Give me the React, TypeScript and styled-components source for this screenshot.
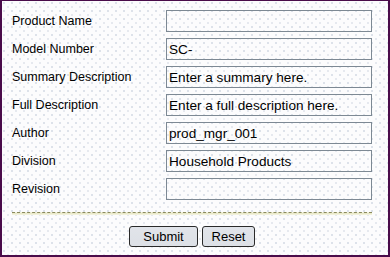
import React from "react";
import styled, { createGlobalStyle } from "styled-components";

const Global = createGlobalStyle`
  html, body { margin: 0; padding: 0; background: #ffffff; }
  * { box-sizing: border-box; }
`;

const dots = `
  radial-gradient(circle at 2px 2px, #dde2ea 0.8px, transparent 1.2px),
  radial-gradient(circle at 6px 6px, #e6e9ef 0.8px, transparent 1.2px),
  #fcfcfd
`;

const Panel = styled.form`
  width: 390px;
  height: 257px;
  border-style: solid;
  border-color: #4a0c4a;
  border-width: 1px 2px 2px 2px;
  background: ${dots};
  background-size: 8px 8px;
  padding: 9px 16px 0 10px;
  display: flex;
  flex-direction: column;
  font-family: "Liberation Sans", Arial, sans-serif;
`;

const Fields = styled.div`
  display: grid;
  grid-template-columns: 154px 206px;
  grid-auto-rows: 22px;
  row-gap: 6px;
  align-items: center;
`;

const Label = styled.label`
  font-size: 12.5px;
  color: #000;
  line-height: 22px;
`;

const Input = styled.input`
  width: 206px;
  height: 22px;
  border: 1px solid #7d8994;
  background: transparent;
  font-family: "Liberation Sans", Arial, sans-serif;
  font-size: 13.6px;
  color: #000;
  padding: 0 2px;
  margin: 0;
  outline: none;
`;

const Divider = styled.div`
  margin-top: 12px;
  height: 3px;
  border-top: 1px dashed #8a8a5e;
  background: linear-gradient(#e4e4c0, #f6f6e6);
`;

const Buttons = styled.div`
  display: flex;
  justify-content: center;
  gap: 4px;
  margin-top: 11px;
`;

const Button = styled.button<{ $w: number }>`
  width: ${(p) => p.$w}px;
  height: 21px;
  border: 1px solid #2a2a2a;
  border-radius: 3px;
  background:
    radial-gradient(circle at 1px 1px, #d6dae1 0.6px, transparent 0.9px),
    linear-gradient(#f6f7f9, #e8ebef);
  background-size: 2px 2px, 100% 100%;
  font-family: "Liberation Sans", Arial, sans-serif;
  font-size: 13px;
  color: #000;
  padding: 0;
  cursor: pointer;
`;

const fields: [string, string][] = [
  ["Product Name", ""],
  ["Model Number", "SC-"],
  ["Summary Description", "Enter a summary here."],
  ["Full Description", "Enter a full description here."],
  ["Author", "prod_mgr_001"],
  ["Division", "Household Products"],
  ["Revision", ""],
];

export default function App() {
  return (
    <>
      <Global />
      <Panel onSubmit={(e) => e.preventDefault()}>
        <Fields>
          {fields.map(([label, value]) => (
            <React.Fragment key={label}>
              <Label>{label}</Label>
              <Input defaultValue={value} />
            </React.Fragment>
          ))}
        </Fields>
        <Divider />
        <Buttons>
          <Button type="submit" $w={69}>Submit</Button>
          <Button type="reset" $w={53}>Reset</Button>
        </Buttons>
      </Panel>
    </>
  );
}
